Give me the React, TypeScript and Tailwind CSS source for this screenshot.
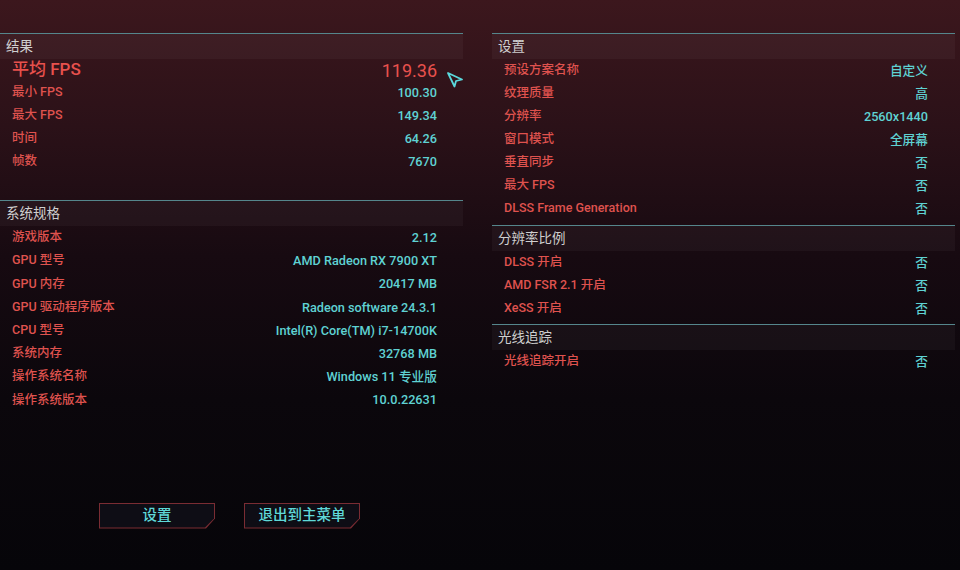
import React from "react";

const FONT = { fontFamily: '"Roboto", "Noto Sans CJK SC", sans-serif' };

type Row = [string, string];

function Header({ title }: { title: string }) {
  return (
    <div className="border-t-[1.5px] border-[#55868c]">
      <div className="h-[25px] flex items-center pl-[6px] bg-[rgba(255,255,255,0.035)] text-[13.5px] text-[#cfcfcf]">
        {title}
      </div>
    </div>
  );
}

function Rows({ rows, h, pr }: { rows: Row[]; h: string; pr: string }) {
  return (
    <div className={`flex flex-col pl-[12px] ${pr}`}>
      {rows.map(([k, v]) => (
        <div key={k} className={`${h} flex items-center justify-between`}>
          <span className="text-[12.5px] font-medium text-[#df524e]">{k}</span>
          <span className="text-[12.7px] font-medium text-[#5fd2d3]">{v}</span>
        </div>
      ))}
    </div>
  );
}

function CutButton({ label }: { label: string }) {
  return (
    <div className="w-[116px] h-[26px] bg-[#7a2c33] [clip-path:polygon(0_0,100%_0,100%_62%,calc(100%-9px)_100%,0_100%)] p-[1px]">
      <div className="w-full h-full bg-[#0e0d15] [clip-path:polygon(0_0,100%_0,100%_62%,calc(100%-9px)_100%,0_100%)] flex items-center justify-center text-[14.5px] font-medium text-[#5fd8d8]">
        {label}
      </div>
    </div>
  );
}

export default function App() {
  const results: Row[] = [
    ["最小 FPS", "100.30"],
    ["最大 FPS", "149.34"],
    ["时间", "64.26"],
    ["帧数", "7670"],
  ];
  const specs: Row[] = [
    ["游戏版本", "2.12"],
    ["GPU 型号", "AMD Radeon RX 7900 XT"],
    ["GPU 内存", "20417 MB"],
    ["GPU 驱动程序版本", "Radeon software 24.3.1"],
    ["CPU 型号", "Intel(R) Core(TM) i7-14700K"],
    ["系统内存", "32768 MB"],
    ["操作系统名称", "Windows 11 专业版"],
    ["操作系统版本", "10.0.22631"],
  ];
  const settings: Row[] = [
    ["预设方案名称", "自定义"],
    ["纹理质量", "高"],
    ["分辨率", "2560x1440"],
    ["窗口模式", "全屏幕"],
    ["垂直同步", "否"],
    ["最大 FPS", "否"],
    ["DLSS Frame Generation", "否"],
  ];
  const scaling: Row[] = [
    ["DLSS 开启", "否"],
    ["AMD FSR 2.1 开启", "否"],
    ["XeSS 开启", "否"],
  ];
  const rt: Row[] = [["光线追踪开启", "否"]];

  return (
    <div
      style={FONT}
      className="relative w-[960px] h-[570px] overflow-hidden bg-[linear-gradient(180deg,#3c171d_0%,#2b1118_22%,#170a11_45%,#0b070c_70%,#060509_100%)]"
    >
      <div className="flex pt-[33px] gap-[29px]">
        {/* Left column */}
        <div className="w-[463px] flex flex-col">
          <Header title="结果" />
          <div className="flex flex-col pl-[12px] pr-[26px]">
            <div className="h-[22px] flex items-center justify-between">
              <span className="text-[17px] font-medium text-[#e8514d]">平均 FPS</span>
              <span className="text-[18px] text-[#e8514d]">119.36</span>
            </div>
          </div>
          <Rows rows={results} h="h-[23px]" pr="pr-[26px]" />
          <div className="mt-[27px]">
            <Header title="系统规格" />
          </div>
          <Rows rows={specs} h="h-[23.2px]" pr="pr-[26px]" />
          <div className="mt-[91px] flex pl-[99px] gap-[29px]">
            <CutButton label="设置" />
            <CutButton label="退出到主菜单" />
          </div>
        </div>

        {/* Right column */}
        <div className="w-[463px] flex flex-col">
          <Header title="设置" />
          <Rows rows={settings} h="h-[23px]" pr="pr-[27px]" />
          <div className="mt-[5px]">
            <Header title="分辨率比例" />
          </div>
          <Rows rows={scaling} h="h-[23px]" pr="pr-[27px]" />
          <div className="mt-[4px]">
            <Header title="光线追踪" />
          </div>
          <Rows rows={rt} h="h-[23px]" pr="pr-[27px]" />
        </div>
      </div>

      {/* cursor */}
      <svg
        className="absolute left-[446px] top-[71px]"
        width="18"
        height="17"
        viewBox="0 0 18 17"
      >
        <path
          d="M2 2 L16 8.5 L10 10 L8.5 15.5 Z"
          fill="none"
          stroke="#5ad8dc"
          strokeWidth="1.8"
          strokeLinejoin="round"
        />
      </svg>
    </div>
  );
}
